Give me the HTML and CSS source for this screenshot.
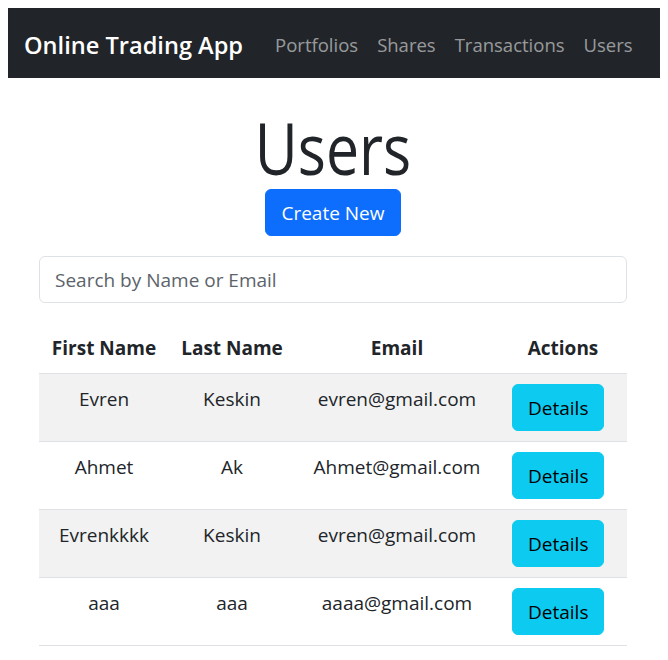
FILE: index.html
```html
<!DOCTYPE html>
<html lang="en">
<head>
<meta charset="utf-8">
<title>Users - Online Trading App</title>
<link rel="stylesheet" href="styles.css">
</head>
<body>
<nav class="navbar">
  <a class="brand" href="#">Online Trading App</a>
  <ul class="nav-links">
    <li><a href="#">Portfolios</a></li>
    <li><a href="#">Shares</a></li>
    <li><a href="#">Transactions</a></li>
    <li><a href="#">Users</a></li>
  </ul>
</nav>
<main class="content">
  <h1 class="title">Users</h1>
  <div class="actions-top">
    <button class="btn btn-primary">Create New</button>
  </div>
  <input class="search" type="text" placeholder="Search by Name or Email">
  <table class="users">
    <colgroup>
      <col class="c1"><col class="c2"><col class="c3"><col class="c4">
    </colgroup>
    <thead>
      <tr><th>First Name</th><th>Last Name</th><th>Email</th><th>Actions</th></tr>
    </thead>
    <tbody>
      <tr><td>Evren</td><td>Keskin</td><td>evren@gmail.com</td><td class="act"><button class="btn btn-info">Details</button></td></tr>
      <tr><td>Ahmet</td><td>Ak</td><td>Ahmet@gmail.com</td><td class="act"><button class="btn btn-info">Details</button></td></tr>
      <tr><td>Evrenkkkk</td><td>Keskin</td><td>evren@gmail.com</td><td class="act"><button class="btn btn-info">Details</button></td></tr>
      <tr><td>aaa</td><td>aaa</td><td>aaaa@gmail.com</td><td class="act"><button class="btn btn-info">Details</button></td></tr>
    </tbody>
  </table>
</main>
</body>
</html>
```
FILE: styles.css
```css
* { box-sizing: border-box; }
body {
  margin: 8px;
  font-family: "Open Sans", "Noto Sans", sans-serif;
  font-size: 19px;
  line-height: 30px;
  color: #212529;
  background: #fff;
}
.navbar {
  display: flex;
  align-items: center;
  height: 70px;
  background: #212529;
  padding: 4px 16px 0;
}
.brand {
  color: #fff;
  text-decoration: none;
  font-size: 23.6px;
  font-weight: 600;
  white-space: nowrap;
  margin-right: 32px;
}
.nav-links {
  display: flex;
  list-style: none;
  margin: 0;
  padding: 0;
  gap: 19px;
}
.nav-links a {
  color: rgba(255,255,255,.55);
  text-decoration: none;
  font-size: 18.5px;
  white-space: nowrap;
}
.content {
  margin: 0 33px 0 31px;
}
.title {
  margin: 30px 0 0;
  text-align: center;
  font-family: "Open Sans", sans-serif;
  font-size: 71px;
  font-weight: 500;
  line-height: 80px;
  transform: scaleX(0.83);
}
.actions-top {
  display: flex;
  justify-content: center;
  margin-top: 1px;
}
.btn {
  font-family: inherit;
  font-size: 19px;
  line-height: 30px;
  padding: 7.5px 15px;
  border: 1px solid transparent;
  border-radius: 6px;
  cursor: pointer;
}
.btn-primary {
  background: #0d6efd;
  border-color: #0d6efd;
  color: #fff;
}
.btn-info {
  background: #0dcaf0;
  border-color: #0dcaf0;
  color: #000;
}
.search {
  display: block;
  width: 100%;
  height: 47px;
  margin-top: 20px;
  padding: 7px 15px;
  font-family: inherit;
  font-size: 19px;
  color: #212529;
  border: 1px solid #dee2e6;
  border-radius: 6px;
}
.search::placeholder { color: #5c636a; }
.users {
  width: 100%;
  margin-top: 20px;
  border-collapse: collapse;
  table-layout: fixed;
}
.c1 { width: 130px; }
.c2 { width: 126px; }
.c3 { width: 204px; }
.c4 { width: 128px; }
.users th, .users td {
  padding: 10px 4px;
  text-align: center;
  vertical-align: top;
  white-space: nowrap;
  border-bottom: 1px solid #dee2e6;
}
.users th { font-weight: 700; }
.users tbody tr:nth-child(odd) { background: #f2f2f2; }
.users td.act { text-align: left; padding: 10px 4px 10px 13px; }
.users td.act .btn { padding: 7.5px 15px; }
```
